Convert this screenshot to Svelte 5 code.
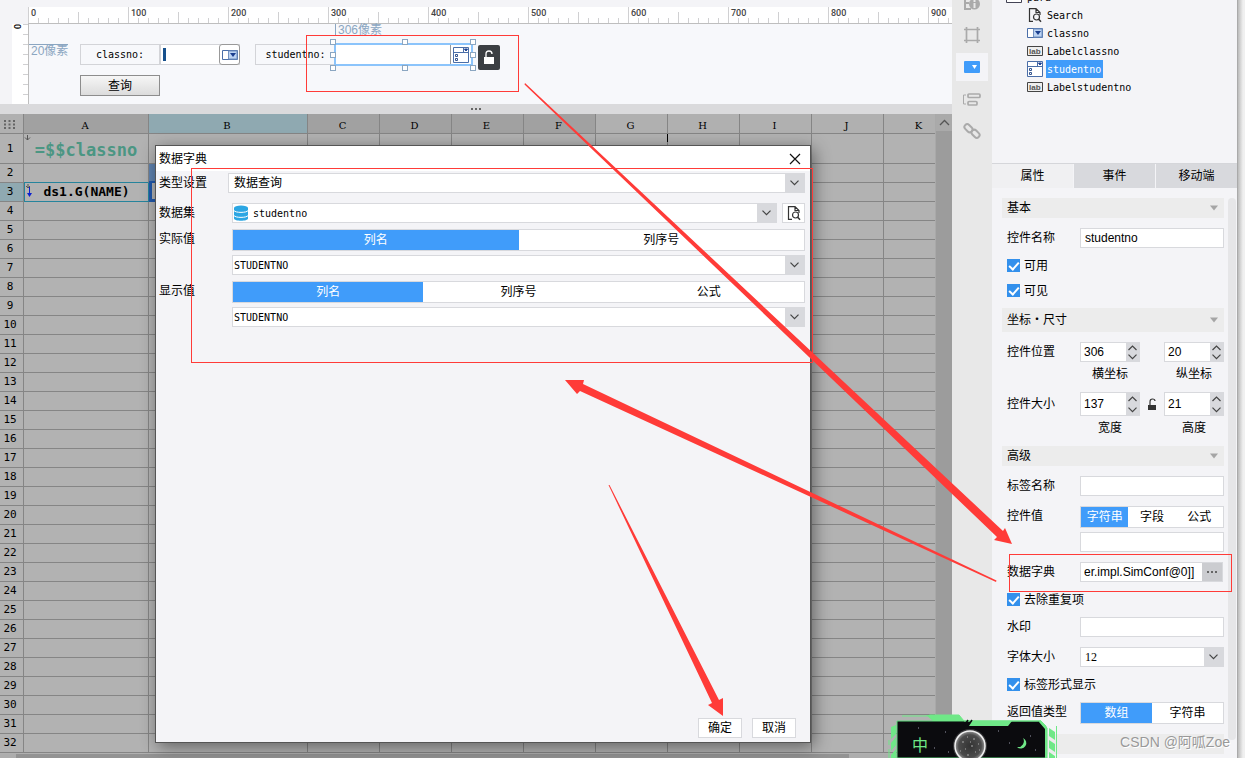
<script>
  const columns = [
    { name: "A", width: 125 },
    { name: "B", width: 159 },
    ...["C", "D", "E", "F", "G", "H", "I", "J", "K"].map((name) => ({ name, width: 72 })),
  ];
  const rows = Array.from({ length: 32 }, (_, i) => i + 1);
  const marks = Array.from({ length: 10 }, (_, i) => i * 100);

  const tree = [
    { name: "Search", icon: "search" },
    { name: "classno", icon: "combo" },
    { name: "Labelclassno", icon: "label" },
    { name: "studentno", icon: "check" },
    { name: "Labelstudentno", icon: "label" },
  ];

  let selected = $state("studentno");
  let tab = $state("属性");
  let actual = $state("列名");
  let display = $state("列名");
  let valueType = $state("字符串");
  let returnType = $state("数组");
</script>

{#snippet chevron()}
  <svg width="9" height="6" viewBox="0 0 9 6"><path d="M.5 .7 4.5 4.7 8.5 .7" fill="none" stroke="#444" stroke-width="1.2" /></svg>
{/snippet}

{#snippet icon(kind)}
  <svg width="16" height="16" viewBox="0 0 16 16" fill="none">
    {#if kind === "search"}
      <path d="M6 14.4H2.5V1.6H9L13 5.5V8M9 1.6V5.5H13" stroke="#333" stroke-width="1.2" />
      <circle cx="9.5" cy="10" r="3" stroke="#333" stroke-width="1.2" />
      <path d="M11.5 12 14 14.7" stroke="#333" stroke-width="1.5" />
    {:else if kind === "combo"}
      <path d="M.5 3.5h15v9H.5z" fill="#fff" stroke="#4a6ea8" />
      <path d="M6.5 4H15v8H6.5z" fill="#bcd3f2" stroke="#7391c0" />
      <path d="M8 6h6l-3 4z" fill="#1b3f8f" />
    {:else if kind === "label"}
      <path d="M.5 3.5h15v9H.5z" fill="#eee" stroke="#444" />
      <text x="2" y="11" class="lab">lab</text>
    {:else if kind === "check"}
      <path d="M.5 .5h15v15H.5zM.5 5.5h15M10.5 .5v5" fill="#fff" stroke="#4a6ea8" />
      <path d="M11.5 2h3l-1.5 2z" fill="#1b3f8f" stroke="#1b3f8f" />
      <path d="M2.5 7.5h2v2h-2zM2.5 11.5h2v2h-2z" stroke="#35558f" />
    {/if}
  </svg>
{/snippet}

{#snippet segment(options, value, pick)}
  <div class="segment">
    {#each options as option}
      <button class:on={option === value} aria-pressed={option === value} onclick={() => pick(option)}>{option}</button>
    {/each}
  </div>
{/snippet}

{#snippet spinner(id, value, label)}
  <div class="spinner">
    <input {id} {value} aria-label={label} />
    <span class="steps">
      <button aria-label="增加"><svg width="9" height="6" viewBox="0 0 9 6"><path d="M.5 5 4.5 1 8.5 5" fill="none" stroke="#444" stroke-width="1.2" /></svg></button>
      <button aria-label="减少">{@render chevron()}</button>
    </span>
  </div>
{/snippet}

{#snippet section(title, tall)}
  <h3 class:tall>
    {title}
    <svg width="10" height="6" viewBox="0 0 10 6"><path d="M1 .5h8L5 5.5z" fill="#a5a5a5" /></svg>
  </h3>
{/snippet}

<div class="designer">
  <main>
    <section class="form">
      <div class="ruler">
        {#each marks as mark}
          <span>{mark}</span>
        {/each}
      </div>
      <div class="work">
        <div class="side-ruler"><span>0</span></div>
        <div class="canvas">
          <span class="hint top">306像素</span>
          <span class="hint left">20像素</span>
          <label class="widget lbl-class" for="classno">classno:</label>
          <div class="widget class-box">
            <input id="classno" />
            <button aria-label="classno">{@render icon("combo")}</button>
          </div>
          <label class="widget lbl-student" for="studentno">studentno:</label>
          <div class="widget student-box">
            <input id="studentno" />
            <button aria-label="studentno">{@render icon("check")}</button>
            {#each ["nw", "n", "ne", "w", "e", "sw", "s", "se"] as corner}
              <i class="handle {corner}"></i>
            {/each}
          </div>
          <button class="widget lock" aria-label="锁定">
            <svg width="22" height="25" viewBox="0 0 22 25"><path d="M6 12h10v7H6z" fill="#fff" /><path d="M8 12V9q0-3 3-3t3 3" fill="none" stroke="#fff" stroke-width="1.3" /></svg>
          </button>
          <button class="widget query">查询</button>
        </div>
      </div>
    </section>

    <div class="splitter"><i></i><i></i><i></i></div>

    <section class="sheet">
      <div class="cells">
        <table>
          <colgroup>
            <col class="num" />
            {#each columns as c}
              <col style="width: {c.width}px" />
            {/each}
          </colgroup>
          <thead>
            <tr>
              <th aria-label="全选">
                <svg width="11" height="9" viewBox="0 0 11 9"><path d="M0 1h11M0 4.5h11M0 8h11" stroke="#666" stroke-width="2" stroke-dasharray="2 2.5" /></svg>
              </th>
              {#each columns as c, i}
                <th class:near={i < 6} class:current={c.name === "B"}>{c.name}</th>
              {/each}
            </tr>
          </thead>
          <tbody>
            {#each rows as row}
              <tr class:first={row === 1} class:second={row === 2} class:third={row === 3}>
                <th class:current={row === 3}>{row}</th>
                {#each columns as c}
                  <td class:picked={c.name === "B" && row === 2} class:active={c.name === "B" && row === 3} class:break={c.name === "G" && row === 1}>
                    {#if c.name === "A" && row === 1}
                      <svg class="corner" width="7" height="6" viewBox="0 0 7 6"><path d="M3.5 0v5M1 2.5l2.5 2.5L6 2.5" fill="none" stroke="#555" /></svg>
                      <span class="formula">=$$classno</span>
                    {:else if c.name === "A" && row === 3}
                      <svg class="corner" width="8" height="15" viewBox="0 0 8 15"><path d="M3 0v4M1 2l2 2 2-2" fill="none" stroke="#555" /><path d="M4.5 3v8" stroke="#0b1fd0" /><path d="M2 9h5l-2.5 4z" fill="#0b1fd0" /></svg>
                      <span class="field">ds1.G(NAME)</span>
                    {/if}
                  </td>
                {/each}
              </tr>
            {/each}
          </tbody>
        </table>
      </div>
      <div class="vscroll">
        <span><svg width="11" height="7" viewBox="0 0 11 7"><path d="M1 6 5.5 1.5 10 6" fill="none" stroke="#555" stroke-width="1.3" /></svg></span>
      </div>
    </section>
    <div class="hscroll"><i></i></div>

    <div class="dialog" role="dialog" aria-label="数据字典">
      <header>
        <h2>数据字典</h2>
        <button aria-label="关闭"><svg width="12" height="12" viewBox="0 0 12 12"><path d="M1 1 11 11M11 1 1 11" stroke="#111" stroke-width="1.2" /></svg></button>
      </header>
      <div class="line type">
        <label for="type">类型设置</label>
        <div class="combo"><select id="type"><option>数据查询</option></select><span class="drop">{@render chevron()}</span></div>
      </div>
      <div class="line">
        <label for="dataset">数据集</label>
        <div class="combo">
          <svg class="db" width="16" height="16" viewBox="0 0 16 16"><path d="M1 3v10.5c0 3 14 3 14 0V3z" fill="#2ba6e3" /><ellipse cx="8" cy="3" rx="7" ry="2.5" fill="#2ba6e3" /><path d="M1 5.5c1 2.5 13 2.5 14 0M1 10.5c1 2.5 13 2.5 14 0" fill="none" stroke="#fff" /></svg>
          <select id="dataset" class="mono"><option>studentno</option></select><span class="drop">{@render chevron()}</span>
        </div>
        <button class="preview" aria-label="预览">{@render icon("search")}</button>
      </div>
      <div class="line tight">
        <label for="actual">实际值</label>
        <div class="stack">
          {@render segment(["列名", "列序号"], actual, (v) => (actual = v))}
          <div class="combo"><select id="actual" class="mono"><option>STUDENTNO</option></select><span class="drop">{@render chevron()}</span></div>
        </div>
      </div>
      <div class="line tight">
        <label for="display">显示值</label>
        <div class="stack">
          {@render segment(["列名", "列序号", "公式"], display, (v) => (display = v))}
          <div class="combo"><select id="display" class="mono"><option>STUDENTNO</option></select><span class="drop">{@render chevron()}</span></div>
        </div>
      </div>
      <footer>
        <button>确定</button>
        <button>取消</button>
      </footer>
    </div>
  </main>

  <nav>
    <button aria-label="单元格元素">
      <svg width="18" height="16" viewBox="0 0 18 16"><path d="M8 2H2v12h6M2 8h4" fill="none" stroke="#aaa" stroke-width="2" /><circle cx="11.5" cy="9" r="5.5" fill="#aaa" /><path d="M11.5 5v2M11.5 8v5" stroke="#e8e8e8" stroke-width="2" /></svg>
    </button>
    <button aria-label="单元格属性">
      <svg width="16" height="16" viewBox="0 0 16 16"><path d="M2.5 0v16M13.5 0v16M0 2.5h16M0 13.5h16" stroke="#aaa" stroke-width="1.7" /></svg>
    </button>
    <button class="on" aria-label="控件设置">
      <svg width="16" height="12" viewBox="0 0 16 12"><rect width="16" height="12" rx="1" fill="#409cfa" /><path d="M8 4h5l-2.5 4z" fill="#fff" /></svg>
    </button>
    <button aria-label="条件属性">
      <svg width="18" height="13" viewBox="0 0 18 13" fill="none" stroke="#aaa"><path d="M3 2H.5v9H3" /><rect x="5" y="1" width="12" height="3.5" rx="1" stroke-width="1.7" /><rect x="5" y="8.500" width="9" height="3.500" rx="1" stroke-width="1.7" /></svg>
    </button>
    <button aria-label="超级链接">
      <svg width="18" height="18" viewBox="0 0 18 18" fill="none" stroke="#aaa" stroke-width="2"><rect x="1" y="3.5" width="9" height="5.5" rx="2.7" transform="rotate(45 5.5 6.2)" /><rect x="8" y="9" width="9" height="5.5" rx="2.7" transform="rotate(45 12.5 11.8)" /></svg>
    </button>
  </nav>

  <aside>
    <div class="tree">
      <p><svg width="16" height="16" viewBox="0 0 16 16"><path d="M.5 .5h15v13H.5z" fill="#fff" stroke="#445" /><path d="M7 1h7v9H7z" fill="#bcd3f2" /></svg>para</p>
      <ul>
        {#each tree as item}
          <li>
            {@render icon(item.icon)}
            <button class:on={item.name === selected} onclick={() => (selected = item.name)}>{item.name}</button>
          </li>
        {/each}
      </ul>
    </div>
    <div class="tabs">
      {#each ["属性", "事件", "移动端"] as name}
        <button class:on={name === tab} onclick={() => (tab = name)}>{name}</button>
      {/each}
    </div>
    <div class="props">
      <div class="fields">
        {@render section("基本", false)}
        <div class="row"><label for="name">控件名称</label><input id="name" value="studentno" /></div>
        <label class="tick"><input type="checkbox" checked />可用</label>
        <label class="tick"><input type="checkbox" checked />可见</label>
        {@render section("坐标・尺寸", true)}
        <div class="row">
          <label for="pos-x">控件位置</label>
          <div class="pair">
            {@render spinner("pos-x", "306", "横坐标")}
            <span></span>
            {@render spinner("pos-y", "20", "纵坐标")}
            <small>横坐标</small><span></span><small>纵坐标</small>
          </div>
        </div>
        <div class="row big">
          <label for="size-w">控件大小</label>
          <div class="pair">
            {@render spinner("size-w", "137", "宽度")}
            <svg width="10" height="13" viewBox="0 0 10 13"><path d="M1 7h8v5H1z" fill="#333" /><path d="M3 7V4q0-3 2.5-3T8 3" fill="none" stroke="#333" stroke-width="1.2" /></svg>
            {@render spinner("size-h", "21", "高度")}
            <small>宽度</small><span></span><small>高度</small>
          </div>
        </div>
        {@render section("高级", false)}
        <div class="row"><label for="tag">标签名称</label><input id="tag" /></div>
        <div class="row">
          <label for="val">控件值</label>
          <div class="stack">
            {@render segment(["字符串", "字段", "公式"], valueType, (v) => (valueType = v))}
            <input id="val" />
          </div>
        </div>
        <div class="row">
          <label for="dict">数据字典</label>
          <div class="more"><input id="dict" value="er.impl.SimConf@0]]" /><button aria-label="编辑"><i></i><i></i><i></i></button></div>
        </div>
        <label class="tick"><input type="checkbox" checked />去除重复项</label>
        <div class="row"><label for="mark">水印</label><input id="mark" /></div>
        <div class="row">
          <label for="font">字体大小</label>
          <div class="combo"><select id="font" class="serif"><option>12</option></select><span class="drop">{@render chevron()}</span></div>
        </div>
        <label class="tick"><input type="checkbox" checked />标签形式显示</label>
        <div class="row">
          <span class="caption">返回值类型</span>
          {@render segment(["数组", "字符串"], returnType, (v) => (returnType = v))}
        </div>
        {@render section("", false)}
      </div>
      <div class="track"></div>
    </div>
  </aside>
  <div class="edge"></div>

  <div class="ime">
    <svg width="170" height="46" viewBox="0 0 170 46">
      <path d="M9 9h144l6 7v30H9z" fill="#0b0b0e" stroke="#5fdc7c" />
      <path d="M14 4h25l3-1h29l5 6h77l5 5" fill="none" stroke="#6fe887" />
      <path d="M38 3h33l5 6H45zM84 9h40l-4 5H80zM152 8l7 7v31h-2V17l-6-7z" fill="#6fe887" />
      <path d="M76 14l4-6M80 14l4-6" stroke="#0b0b0e" stroke-width="1.5" />
      <path d="M3 15l5-2v9l-5 5zM3 31l5-6v8l-5 6zM3 43l5-6v9H3zM161 16l6 4v8l-6-4zM161 28l6 4v8l-6-4zM161 40l6 4v2h-6z" fill="#6fe887" />
      <path d="M1 28v5M1 37v9M168.5 14v32" stroke="#6fe887" />
      <path d="M30 16h1M57 20h1M60 40h1M110 19h1M121 31h1M142 24h1M147 38h1M46 36h1" stroke="#99a" />
      <defs>
        <radialGradient id="moon"><stop offset="0" stop-color="#333" /><stop offset=".75" stop-color="#4b4b4b" /><stop offset="1" stop-color="#999" /></radialGradient>
      </defs>
      <circle cx="82" cy="34" r="17" fill="#777" opacity=".4" />
      <circle cx="82" cy="34" r="15" fill="url(#moon)" stroke="#f2f2f2" stroke-width="1.5" />
      <path d="M74 30h2M79 25h1M85 27h2M90 32h1M77 37h1M83 34h2M87 40h1M79 43h2M72 39h1M82 30h1M91 38h1" stroke="#aaa" />
      <path d="M135 26a5.5 5.500 0 1 1-6 9 6 6 0 0 0 6-9z" fill="#6fe887" />
      <text x="24" y="39">中</text>
    </svg>
  </div>
  <div class="watermark">CSDN @阿呱Zoe</div>

  <svg class="marks" width="1245" height="758" viewBox="0 0 1245 758">
    <g fill="none" stroke="#ff3b38">
      <rect x="306.5" y="35.5" width="212" height="56" />
      <rect x="191.5" y="168.5" width="621" height="194" />
      <rect x="1009.5" y="554.5" width="222" height="37" />
    </g>
    <g fill="#ff3b38">
      <path d="M525 83 524.5 84.5 997 537 994 540 1012 544 1005 528 1003 531z" />
      <path d="M996 582 996.5 580.5 583 384 584 380 565 380 577 394 580 391z" />
      <path d="M608.5 485 609.5 485 719 700 723 698 723 716 708 705 712 703z" />
    </g>
  </svg>
</div>

<style>
  :global(body) {
    margin: 0;
    background: #f4f4f7;
  }
  .designer {
    position: relative;
    display: flex;
    height: 100vh;
    overflow: hidden;
    color: #000;
    font-family: "Liberation Sans", "Noto Sans CJK SC", sans-serif;
    font-size: 12px;
    line-height: 16px;
  }
  .designer * {
    box-sizing: border-box;
  }
  button,
  input,
  select {
    font: inherit;
    color: inherit;
    margin: 0;
    padding: 0;
    border: 0;
    border-radius: 0;
    background: none;
    outline: none;
    min-width: 0;
  }
  svg {
    display: block;
    flex: none;
  }
  .lab {
    font: bold 8px "Liberation Sans", sans-serif;
    fill: #555;
  }
  main {
    position: relative;
    flex: 1;
    min-width: 0;
    display: flex;
    flex-direction: column;
  }

  /* form designer */
  .form {
    display: flex;
    flex-direction: column;
    height: 104px;
    padding-top: 7px;
    flex: none;
  }
  .ruler {
    display: flex;
    height: 17px;
    margin-left: 28px;
    overflow: hidden;
    border-bottom: 1px solid #bebebe;
    background: #fff;
  }
  .ruler span {
    flex: 0 0 100px;
    padding-left: 3px;
    font: 500 9px/13px Roboto, sans-serif;
    color: #444;
    background:
      linear-gradient(#d0d0d2, #d0d0d2) 0 0 / 1px 100% no-repeat,
      linear-gradient(#d0d0d2, #d0d0d2) 50px 100% / 1px 11px no-repeat,
      repeating-linear-gradient(90deg, #d0d0d2 0 1px, transparent 1px 10px) 0 100% / 100% 5px no-repeat;
  }
  .ruler span:last-child {
    flex: 1 0 24px;
  }
  .work {
    display: flex;
    flex: 1;
  }
  .side-ruler {
    width: 17px;
    margin-left: 12px;
    background: repeating-linear-gradient(#d0d0d2 0 1px, transparent 1px 10px) 100% 0 / 5px 100% no-repeat, #fff;
    border-right: 1px solid #bebebe;
  }
  .side-ruler span {
    display: block;
    width: 10px;
    font: 500 9px/10px Roboto, sans-serif;
    writing-mode: vertical-rl;
  }
  .canvas {
    position: relative;
    flex: 1;
    background: #f7f8fb;
  }
  .hint {
    position: absolute;
    line-height: 12px;
    color: #8ba6c1;
  }
  .hint.top {
    left: 306px;
    top: 0;
    padding-left: 2px;
    border-left: 1px solid #8ba6c1;
  }
  .hint.left {
    left: 0;
    top: 20px;
    padding-left: 2px;
    border-top: 1px solid #8ba6c1;
  }
  .widget {
    position: absolute;
    height: 21px;
    display: flex;
    align-items: center;
    justify-content: center;
  }
  label.widget {
    width: 80px;
    border: 1px solid #d3d4d8;
    font: 10px "DejaVu Sans Mono", monospace;
  }
  .lbl-class {
    left: 51px;
    top: 20px;
  }
  .class-box {
    left: 131px;
    top: 20px;
    width: 80px;
    border: 1px solid #d3d4d8;
    background: #fff;
  }
  .class-box input {
    flex: 1;
    height: 13px;
    margin-left: 2px;
    border-left: 3px solid #17508c;
  }
  .class-box button {
    width: 21px;
    height: 21px;
    margin: 0 -1px 0 0;
    padding-left: 2px;
    border: 1px solid #999;
    border-radius: 3px;
    background: #fff;
  }
  label.lbl-student {
    left: 226px;
    top: 20px;
    border-right: 0;
  }
  .student-box {
    left: 305px;
    top: 19px;
    width: 139px;
    height: 23px;
    border: 2px solid #8bc4fb;
    background: #fff;
  }
  .student-box input {
    flex: 1;
    height: 100%;
  }
  .student-box > button {
    width: 21px;
    height: 19px;
    padding-left: 2px;
    border-left: 1px solid #999;
  }
  .handle {
    position: absolute;
    width: 6px;
    height: 6px;
    border: 1px solid #8ba6c1;
    background: #fff;
  }
  .nw, .n, .ne {
    top: -6px;
  }
  .sw, .s, .se {
    bottom: -7px;
  }
  .w, .e {
    top: 7px;
  }
  .nw, .w, .sw {
    left: -6px;
  }
  .n, .s {
    left: 66px;
  }
  .ne, .e, .se {
    right: -5px;
  }
  .lock {
    left: 449px;
    top: 21px;
    width: 22px;
    height: 25px;
    border-radius: 2px;
    background: #3b3f43;
  }
  .query {
    left: 51px;
    top: 51px;
    width: 80px;
    border: 1px solid #8d8d8d;
    background: linear-gradient(#f6f6f6, #dcdcdc);
  }
  .splitter {
    flex: 0 0 10px;
    display: flex;
    align-items: center;
    justify-content: center;
    gap: 2px;
    background: #dadadc;
  }
  .splitter i,
  .more i {
    width: 2px;
    height: 2px;
    background: #666;
  }

  /* report sheet */
  .sheet {
    display: flex;
    flex: 1;
    min-height: 0;
    background: #b0b0b0;
  }
  .cells {
    flex: 1;
    min-width: 0;
    overflow: hidden;
  }
  table {
    width: 1px;
    table-layout: fixed;
    border-collapse: separate;
    border-spacing: 0;
  }
  .num {
    width: 24px;
  }
  th,
  td {
    position: relative;
    height: 19px;
    padding: 0;
    border: solid #858585;
    border-width: 0 1px 1px 0;
    line-height: 12px;
    background: #b2b2b2;
  }
  th {
    font: 11px/12px "DejaVu Sans Mono", monospace;
    padding-right: 3px;
  }
  thead th {
    height: 20px;
    padding: 4px 2px 0 0;
    font: 10px/12px "DejaVu Serif", serif;
    background: #b0b0b0;
  }
  thead th svg {
    margin: -3px 0 0 4px;
  }
  thead th.near {
    background: #a1a1a1;
  }
  thead th.current,
  tbody th.current {
    background: #8fa9b1;
  }
  .first th,
  .first td {
    height: 30px;
  }
  .second td:nth-child(2) {
    border-bottom-color: #26849c;
  }
  .third td:nth-child(2) {
    border-color: #26849c;
    border-left-width: 1px;
  }
  .picked {
    background: #5f82ae;
    border-bottom: 2px solid #2158ab;
  }
  .active {
    border-left: 3px solid #2158ab;
    border-bottom: 3px solid #2158ab;
  }
  .break::after {
    content: "";
    position: absolute;
    top: 0;
    right: -1px;
    width: 1px;
    height: 8px;
    background: #000;
  }
  .corner {
    position: absolute;
    top: 1px;
    left: 0;
  }
  .formula,
  .field {
    display: block;
    text-align: center;
    font: bold 13px/16px "DejaVu Sans Mono", monospace;
  }
  .formula {
    padding-top: 3px;
    font-size: 17px;
    color: #4b9683;
  }
  .vscroll {
    width: 17px;
    background: #9c9c9c;
    border-left: 1px solid #a9a9a9;
  }
  .vscroll span {
    display: grid;
    place-items: center;
    height: 17px;
    background: #aaa;
  }
  .hscroll {
    flex: 0 0 4px;
    padding-left: 16px;
    background: #adadad;
  }
  .hscroll i {
    display: block;
    width: 89%;
    height: 100%;
    background: #939393;
  }

  /* dictionary dialog */
  .dialog {
    position: absolute;
    inset: 145px 141px 15px 155px;
    display: flex;
    flex-direction: column;
    border: 1px solid #555;
    background: #f4f4f7;
    box-shadow: 3px 4px 16px rgba(0, 0, 0, 0.45);
  }
  header {
    display: flex;
    justify-content: space-between;
    align-items: center;
    height: 25px;
    padding: 0 9px 0 3px;
    background: #fff;
  }
  h2 {
    margin: 0;
    font: inherit;
  }
  .line {
    display: flex;
    margin: 10px 5px 0 3px;
  }
  .line label {
    flex: 0 0 73px;
    line-height: 20px;
  }
  .line.type {
    margin-top: 2px;
  }
  .type label {
    flex-basis: 69px;
  }
  .line.tight {
    margin-top: 6px;
  }
  .stack {
    flex: 1;
    display: flex;
    flex-direction: column;
    gap: 4px;
    min-width: 0;
  }
  .combo {
    flex: 1;
    display: flex;
    align-items: center;
    height: 20px;
    min-width: 0;
    border: 1px solid #d8d9dd;
    background: #fff;
  }
  .stack .combo {
    flex: none;
  }
  .combo select {
    flex: 1;
    height: 18px;
    appearance: none;
    padding-left: 1px;
  }
  .type .combo select {
    padding-left: 5px;
  }
  .combo select.mono {
    font: 10px "DejaVu Sans Mono", monospace;
  }
  .combo select.serif {
    padding-left: 4px;
    font-family: "Liberation Serif", serif;
  }
  .db + select {
    margin-left: 3px;
  }
  .drop {
    display: grid;
    place-items: center;
    width: 19px;
    height: 18px;
    background: #d8d9dd;
  }
  .preview {
    display: grid;
    place-items: center;
    width: 23px;
    margin-left: 5px;
    border: 1px solid #d8d9dd;
    background: #fff;
  }
  .segment {
    display: flex;
    height: 22px;
    border: 1px solid #d8d9dd;
    background: #fff;
  }
  .segment button {
    flex: 1;
  }
  .segment .on {
    color: #fff;
    background: #409cfa;
  }
  footer {
    display: flex;
    justify-content: flex-end;
    gap: 10px;
    margin-top: auto;
    padding: 0 14px 4px;
  }
  footer button {
    width: 44px;
    height: 20px;
    border: 1px solid #d8d9dd;
    background: #fff;
  }

  /* tool strip */
  nav {
    flex: 0 0 40px;
    display: flex;
    flex-direction: column;
    align-items: center;
    gap: 4px;
    background: #e8e8e8;
  }
  nav button {
    display: grid;
    place-items: center;
    width: 32px;
    height: 28px;
    flex: none;
  }
  nav button:first-child {
    margin-top: -11px;
  }
  nav .on {
    background: #f4f4f7;
  }

  /* property panel */
  aside {
    flex: 0 0 246px;
    min-width: 0;
    display: flex;
    flex-direction: column;
    background: #f4f4f7;
    border-right: 1px solid #aaa;
  }
  .tree {
    height: 164px;
    flex: none;
    overflow: hidden;
    border-bottom: 1px solid #d5d6da;
    font: 10px "DejaVu Sans Mono", monospace;
  }
  .tree p {
    display: flex;
    align-items: center;
    gap: 5px;
    height: 18px;
    margin: -12px 0 0 14px;
  }
  ul {
    list-style: none;
    margin: 0 0 0 22px;
    padding: 0 0 0 13px;
  }
  li {
    display: flex;
    align-items: center;
    height: 18px;
    gap: 3px;
  }
  li button {
    height: 18px;
    padding: 0 2px 0 1px;
  }
  li .on {
    color: #fff;
    background: #409cfa;
  }
  .tabs {
    display: flex;
    gap: 1px;
    height: 24px;
    flex: none;
  }
  .tabs button {
    flex: 1;
    background: #d8d9dd;
  }
  .tabs .on {
    background: #f0f0f2;
  }
  .props {
    flex: 1;
    display: flex;
    gap: 4px;
    min-height: 0;
    padding: 10px 1px 0 10px;
  }
  .fields {
    flex: 1;
    display: flex;
    flex-direction: column;
    gap: 10px;
    min-width: 0;
  }
  .track {
    width: 8px;
    height: calc(100% - 18px);
    border-radius: 4px;
    background: #e6e6e8;
  }
  h3 {
    display: flex;
    align-items: center;
    justify-content: space-between;
    flex: none;
    height: 20px;
    margin: 0;
    padding: 0 5px;
    font: inherit;
    background: #ececec;
  }
  h3.tall {
    height: 24px;
  }
  .row {
    display: grid;
    grid-template-columns: 73px minmax(0, 1fr);
    padding-left: 5px;
    flex: none;
  }
  .row label,
  .caption {
    line-height: 20px;
    white-space: nowrap;
  }
  .row > input,
  .stack > input {
    height: 20px;
    padding-left: 4px;
    border: 1px solid #d8d9dd;
    background: #fff;
  }
  .tick {
    display: flex;
    align-items: center;
    gap: 4px;
    height: 15px;
    padding-left: 5px;
    flex: none;
  }
  .tick input {
    display: grid;
    place-items: center;
    width: 13px;
    height: 13px;
    appearance: none;
    border: 1px solid #3390ec;
  }
  .tick input:checked {
    background: #3390ec;
  }
  .tick input:checked::before {
    content: "";
    width: 4px;
    height: 8px;
    margin-bottom: 2px;
    border: solid #fff;
    border-width: 0 2px 2px 0;
    transform: rotate(42deg);
  }
  .pair {
    display: grid;
    grid-template-columns: 60px 24px 60px;
    row-gap: 4px;
    align-items: center;
    justify-items: center;
  }
  .pair small {
    font-size: 12px;
  }
  .spinner {
    display: flex;
    width: 100%;
    height: 20px;
    border: 1px solid #d8d9dd;
    background: #fff;
  }
  .spinner input {
    flex: 1;
    padding-left: 3px;
  }
  .big .spinner {
    height: 24px;
  }
  .big label {
    line-height: 24px;
  }
  .steps {
    display: flex;
    flex-direction: column;
    width: 13px;
    background: #d8d9dd;
  }
  .steps button {
    flex: 1;
    display: grid;
    place-items: center;
  }
  .more {
    display: flex;
    height: 20px;
    margin-right: 1px;
    border: 1px solid #d8d9dd;
    background: #fff;
  }
  .more input {
    flex: 1;
    padding-left: 3px;
  }
  .more button {
    display: flex;
    align-items: center;
    justify-content: center;
    gap: 2px;
    width: 20px;
    background: #cbccd0;
  }
  .edge {
    flex: 0 0 7px;
    background: linear-gradient(90deg, #bbb, #f0f0f0 5px);
  }

  .ime {
    position: absolute;
    right: 187px;
    bottom: 0;
  }
  .ime text {
    font: 16px "Noto Sans CJK SC", sans-serif;
    fill: #6fe887;
  }
  .watermark {
    position: absolute;
    right: 15px;
    bottom: 8px;
    font-size: 14px;
    color: #999;
    text-shadow: 1px 1px 0 #fff;
  }
  .marks {
    position: absolute;
    top: 0;
    left: 0;
    pointer-events: none;
  }
</style>
